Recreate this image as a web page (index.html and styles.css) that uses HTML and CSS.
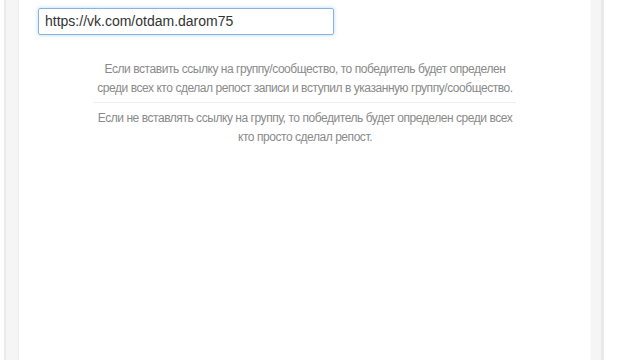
FILE: index.html
```html
<!DOCTYPE html>
<html>
<head>
<meta charset="utf-8">
<link rel="stylesheet" href="styles.css">
</head>
<body>
<div class="page">
  <div class="strip strip-left"></div>
  <div class="main">
    <div class="field">https://vk.com/otdam.darom75</div>
    <div class="note">
      <p class="note-text">Если вставить ссылку на группу/сообщество, то победитель будет определен<br>среди всех кто сделал репост записи и вступил в указанную группу/сообщество.</p>
      <div class="sep"></div>
      <p class="note-text">Если не вставлять ссылку на группу, то победитель будет определен среди всех<br>кто просто сделал репост.</p>
    </div>
  </div>
  <div class="strip strip-right"></div>
</div>
</body>
</html>
```
FILE: styles.css
```css
html, body {
  margin: 0;
  padding: 0;
  background: #ffffff;
}
.page {
  display: flex;
  height: 360px;
  padding-left: 4px;
  font-family: "Liberation Sans", Arial, sans-serif;
}
.strip {
  background: #f5f5f5;
  flex: none;
}
.strip-left {
  width: 12px;
  border-left: 2px solid #ebebeb;
  border-right: 1px solid #ececec;
}
.strip-right {
  width: 10px;
  border-left: 1px solid #fafafa;
  border-right: 3px solid #e9e9e9;
}
.main {
  flex: none;
  width: 552px;
  padding-top: 8px;
  padding-left: 19px;
}
.field {
  width: 282px;
  height: 25px;
  border: 1px solid #86b4e0;
  border-radius: 2px;
  box-shadow: 0 0 4px rgba(102, 175, 233, 0.45);
  padding: 0 6px;
  font-size: 14px;
  line-height: 25px;
  color: #333333;
}
.note {
  width: 422px;
  margin-left: 56px;
  margin-top: 25px;
  text-align: center;
}
.note-text {
  margin: 0 -6px;
  font-size: 12px;
  letter-spacing: -0.45px;
  line-height: 19px;
  color: #8a8a8a;
  white-space: nowrap;
}
.sep {
  height: 1px;
  background: #eeeeee;
  margin: 4px 0 6px;
}
```
